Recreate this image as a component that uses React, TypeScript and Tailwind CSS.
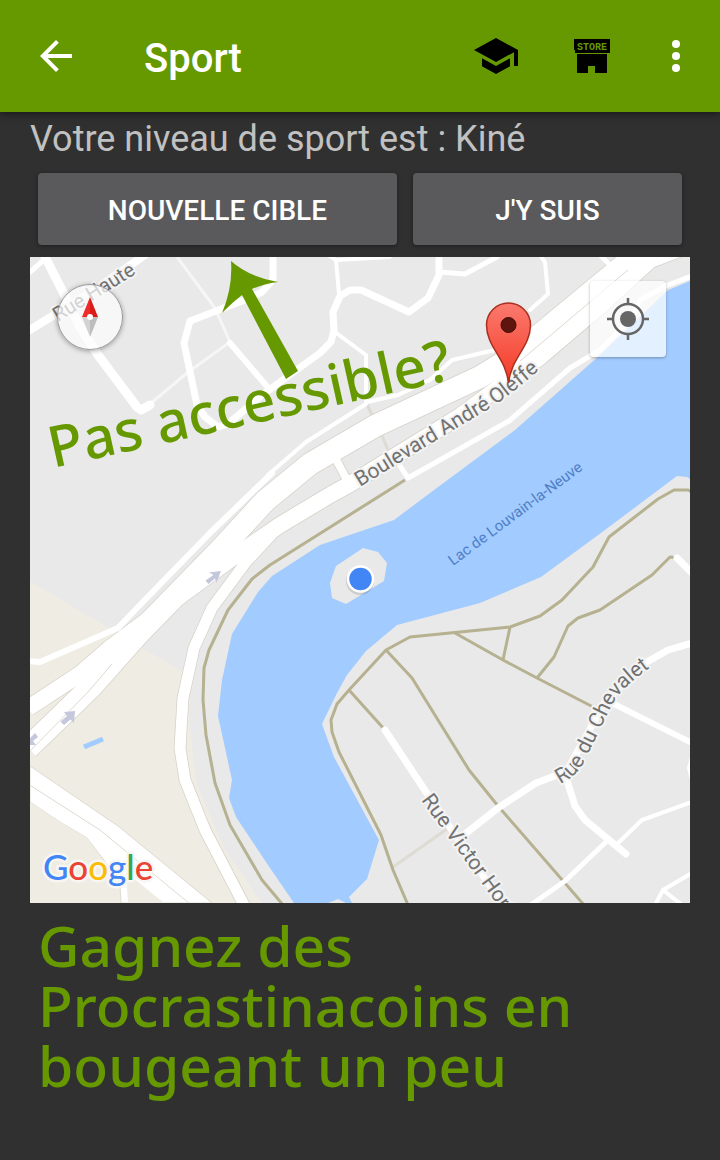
import React from "react";

const white = [
  { w: 5, d: "M30 272L46 258" },
  { w: 9, d: "M44 255L62 290L80 327L98 355L137 407L141 410L150 405" },
  { w: 8, d: "M28 331L90 293L145 255" },
  { w: 7, d: "M273 255V280L262 292L250 298L190 321L184 343L197 405L205 417L218 427L228 424L262 395L320 353L331 342L334 330L333 312L340 296L350 290L361 290L409 312L428 298L439 275V255" },
  { w: 6, d: "M230 343L270 390" },
  { w: 4, d: "M328 255L336 260L390 257M336 260L339 294" },
  { w: 5, d: "M439 272L465 274L497 257" },
  { w: 4, d: "M335 332L366 355V402M367 402L398 395L430 380L452 360L495 350" },
  { w: 4, d: "M366 404L306 442L268 475" },
  { w: 6, d: "M272 473L210 533L137 608L118 628L40 662L28 661" },
  { w: 4, d: "M540 255L545 262L548 294L530 310" },
  { w: 5, d: "M600 255L610 265" },
  { w: 5, d: "M400 466L408 478L470 443L509 421L570 368L600 350L632 318L640 300L668 285L692 276" },
  { w: 7, d: "M677 558L692 573" },
  { w: 7, d: "M385 730L428 795L512 918" },
  { w: 7, d: "M460 838L498 808L536 783L560 774" },
  { w: 7, d: "M565 774L575 806L585 820L626 854" },
  { w: 7, d: "M565 774L605 702L640 666L668 650L692 643" },
  { w: 6, d: "M612 703L692 743" },
  { w: 5, d: "M528 907L565 881L607 841" },
  { w: 4, d: "M616 845L642 820L692 802M655 905L663 890L692 873M663 890L682 905M692 757L689 768L692 780" },
];

const cased = [
  { w: 22, d: "M28 748L92 686L140 632L220 550L265 501L310 464L375 426L480 377L514 356L560 318L642 250" },
  { w: 16, d: "M28 708L80 674L110 648L180 596L235 556L280 525L330 495L350 484L460 416L540 357L600 306L650 260L692 244" },
  { w: 11, d: "M272 534L246 562L212 608L194 648L183 698L180 748L185 780L205 830L243 903L246 909" },
  { w: 8, d: "M330 448L348 482" },
];

const footpaths = [
  "M405 480L270 565L252 579L228 610L209 650L204 668L203 700L206 735L215 783L230 825L262 880L283 905",
  "M692 492L688 490H674L658 499L609 537L593 567L562 600L540 616L510 627L410 637L386 650L349 690L337 704L331 720L332 732L339 752L381 835L393 870L408 905",
  "M386 650L412 678L469 770L498 806L584 905",
  "M349 690L385 730",
  "M455 633L503 660L537 678L597 709",
  "M510 627L503 660",
  "M537 678L554 657L568 626L578 618L600 610L652 575L670 557L677 558",
];

function MapDrawing() {
  return (
    <svg viewBox="30 257 660 646" className="block h-auto w-full" role="img" aria-label="Carte">
      <defs>
        <linearGradient id="pin" x1="0" y1="0" x2="0" y2="1">
          <stop offset="0" stopColor="#fb7a6e" />
          <stop offset="1" stopColor="#f43a26" />
        </linearGradient>
        <path id="haute" d="M58 322L145 268" />
        <path id="boulevard" d="M360 487L430 444L492 407Q512 394 560 352" />
        <path id="lac" d="M453 566L600 457" />
        <path id="chevalet" d="M560 784Q578 776 586 758L612 705Q622 686 658 662" />
        <path id="victor" d="M421 800L517 932" />
      </defs>
      <rect x="30" y="257" width="660" height="646" fill="#e9e9e9" />
      <path d="M30 581L120 635L187 674L190 730L197 785L225 850L262 903H30Z" fill="#efece4" />
      <path
        d="M690 281L668 290L600 355L515 430L430 493L394 520L320 545L272 576L258 592L232 634L222 680L218 716L232 780L229 798L236 817L270 868L294 903H328L338 899L346 903H352L349 897L367 879L379 840L334 757L322 724L337 693L347 675L366 651L397 625L480 603L541 577L605 530L677 476L687 477L690 479Z"
        fill="#a2cbff"
      />
      <path d="M363 548L378 552L387 563L384 581L346 604L332 598L330 583L336 566Z" fill="#e9e9e9" />
      <path d="M84 747L103 739" stroke="#a2cbff" strokeWidth="5" />
      <g fill="none" strokeLinejoin="round">
        <path d="M177 257L215 308L230 342L187 373L150 404" stroke="#f6f6f6" strokeWidth="3" />
        <path d="M367 404L373 417M380 431L388 450M393 867L447 829" stroke="#dddbd4" strokeWidth="3" />
        {footpaths.map((d) => (
          <path key={d} d={d} stroke="#b6b190" strokeWidth="3" />
        ))}
        {cased.map((r) => (
          <path key={r.d} d={r.d} stroke="#d6d2c8" strokeWidth={r.w + 1.5} />
        ))}
        {white.map((r) => (
          <path key={r.d} d={r.d} stroke="#fff" strokeWidth={r.w} strokeLinecap="round" />
        ))}
        {cased.map((r) => (
          <path key={r.d} d={r.d} stroke="#fff" strokeWidth={r.w} />
        ))}
      </g>
      <path d="M30 766L118 826L212 903H121L120 886L110 868L87 838L60 822L30 802Z" fill="#fff" stroke="#dedad0" />
      <path d="M87 838L112 872L116 903H30V802L60 822Z" fill="#efece4" />
      <path d="M126 872L128 903H164Z" fill="#efece4" />
      <path d="M28 784L100 830L190 904M30 751L88 692L112 664M520 361L545 340L610 285L628 270" fill="none" stroke="#dedad0" />
      <g fill="#c5c8dd">
        <path d="M205.500 580.500L213.500 575L209 572.500L221 571L216.500 582.700L215 578.500L208.500 584Z" />
        <path d="M60.500 721.500L67 716L64 712L75 711L74 723L70.500 719.500L64 725Z" />
        <path d="M30 738L35 733L38 737L33 741L36 745H30Z" />
      </g>
      <g fontFamily="Roboto, sans-serif" fontSize="21" fill="#717171" stroke="#f3f3f3" strokeWidth="4" strokeLinejoin="round" paintOrder="stroke">
        <text fontSize="20"><textPath href="#haute">Rue Haute</textPath></text>
        <text><textPath href="#boulevard">Boulevard André Oleffe</textPath></text>
        <text><textPath href="#chevalet">Rue du Chevalet</textPath></text>
        <text><textPath href="#victor">Rue Victor Horta</textPath></text>
      </g>
      <text fontFamily="Roboto, sans-serif" fontSize="15" fill="#4f80c6"><textPath href="#lac">Lac de Louvain-la-Neuve</textPath></text>
      <circle cx="360" cy="581" r="14" fill="#000" opacity=".12" />
      <circle cx="360.500" cy="579" r="12.500" fill="#4285f4" stroke="#fff" strokeWidth="2.500" />
      <path d="M508.500 383C506 358 486.500 347 486.500 325A22 22 0 0 1 530.500 325C530.500 347 511 358 508.500 383Z" fill="url(#pin)" stroke="#a9301f" strokeWidth="1.500" />
      <circle cx="508.500" cy="325" r="7.500" fill="#5e140f" stroke="#3f0c08" />
      <text x="43" y="880" fontFamily="Lato, sans-serif" fontSize="35" fontWeight="500" stroke="#f8f6f2" strokeWidth="5" strokeLinejoin="round" paintOrder="stroke">
        <tspan fill="#4285f4">G</tspan><tspan fill="#ea4335">o</tspan><tspan fill="#fbbc05">o</tspan><tspan fill="#4285f4">g</tspan><tspan fill="#34a853">l</tspan><tspan fill="#ea4335">e</tspan>
      </text>
      <path d="M231 261Q249 277 278 282Q263 284 252 289L298 371L286 379L242 295Q233 302 222 313Q233 287 231 261Z" fill="#690" />
      <text x="53" y="468" transform="rotate(-12.500 53 468)" fontFamily="Noto Sans, sans-serif" fontSize="57" fontWeight="500" fill="#690">Pas accessible?</text>
    </svg>
  );
}

export default function App() {
  return (
    <div className="min-h-screen bg-[#303030] font-['Roboto',sans-serif]">
      <header className="relative flex h-28 items-center bg-[#669900] pr-5 pl-8 shadow-[0_2px_8px_rgba(0,0,0,0.5)]">
        <button aria-label="Retour" className="flex size-12 items-center justify-center">
          <svg viewBox="0 0 24 24" className="size-12" fill="#fff">
            <path d="M20 11H7.830l5.590-5.590L12 4l-8 8 8 8 1.410-1.410L7.830 13H20v-2z" />
          </svg>
        </button>
        <h1 className="ml-16 flex-1 pt-1.5 text-[40px] leading-12 font-medium text-white">Sport</h1>
        <button aria-label="Niveau" className="mr-12 flex size-12 items-center justify-center">
          <svg viewBox="0 0 24 24" className="size-12">
            <path d="M5 13.180v4L12 21l7-3.820v-4L12 17l-7-3.820zM12 3L1 9l11 6 9-4.910V17h2V9L12 3z" />
          </svg>
        </button>
        <button aria-label="Boutique" className="mr-9 flex size-12 items-center justify-center">
          <svg viewBox="0 0 48 48" className="size-12">
            <path d="M6 7h36v14H7v-3H6zM9 22h30v19H27v-7h-7v7H9z" />
            <text x="24" y="18" textAnchor="middle" fontFamily="Liberation Mono, monospace" fontSize="10" fontWeight="700" fill="#669900">STORE</text>
          </svg>
        </button>
        <button aria-label="Plus d'options" className="flex size-12 items-center justify-center">
          <svg viewBox="0 0 24 24" className="size-12" fill="#fff">
            <circle cx="12" cy="6" r="2" /><circle cx="12" cy="12" r="2" /><circle cx="12" cy="18" r="2" />
          </svg>
        </button>
      </header>
      <main className="px-[30px] pt-1.5">
        <p className="text-4xl leading-[42px] text-[#c1c1c1]">Votre niveau de sport est : Kiné</p>
        <div className="mt-[13px] flex gap-4 px-2 text-[28px] font-medium text-white">
          <button className="h-[72px] flex-[4] rounded bg-[#5a5a5c] pt-1 shadow-[0_1px_4px_rgba(0,0,0,0.4)]">NOUVELLE CIBLE</button>
          <button className="h-[72px] flex-[3] rounded bg-[#5a5a5c] pt-1 shadow-[0_1px_4px_rgba(0,0,0,0.4)]">J'Y SUIS</button>
        </div>
        <section className="relative mt-3 overflow-hidden">
          <MapDrawing />
          <button aria-label="Orienter la carte au nord" className="absolute top-[27px] left-[27px] size-[66px] rounded-full border border-[#999] bg-[#fcfcfc]/70 shadow-[0_1px_5px_rgba(0,0,0,0.35)]">
            <svg viewBox="0 0 64 64" className="size-16">
              <path d="M32 12L24 32H32Z" fill="#ef2b2b" />
              <path d="M32 12L40 32H32Z" fill="#d91e18" />
              <path d="M24 32L32 52V32Z" fill="#d2d2d2" />
              <path d="M40 32L32 52V32Z" fill="#bdbdbd" />
              <circle cx="32" cy="32" r="3" fill="#fff" />
            </svg>
          </button>
          <button aria-label="Ma position" className="absolute top-6 right-6 flex size-[76px] items-center justify-center rounded-sm bg-white/70 shadow-[0_1px_3px_rgba(0,0,0,0.3)]">
            <svg viewBox="0 0 42 42" className="size-[42px]" fill="none" stroke="#666" strokeWidth="2.500">
              <circle cx="21" cy="21" r="15" />
              <circle cx="21" cy="21" r="8" fill="#666" stroke="none" />
              <path d="M21 0V6M21 36V42M0 21H6M36 21H42" />
            </svg>
          </button>
        </section>
        <p className="mt-3 pl-2 font-['Noto_Sans',sans-serif] text-[57px] leading-[60px] font-medium text-[#669900]">
          Gagnez des<br />Procrastinacoins en<br />bougeant un peu
        </p>
      </main>
    </div>
  );
}
